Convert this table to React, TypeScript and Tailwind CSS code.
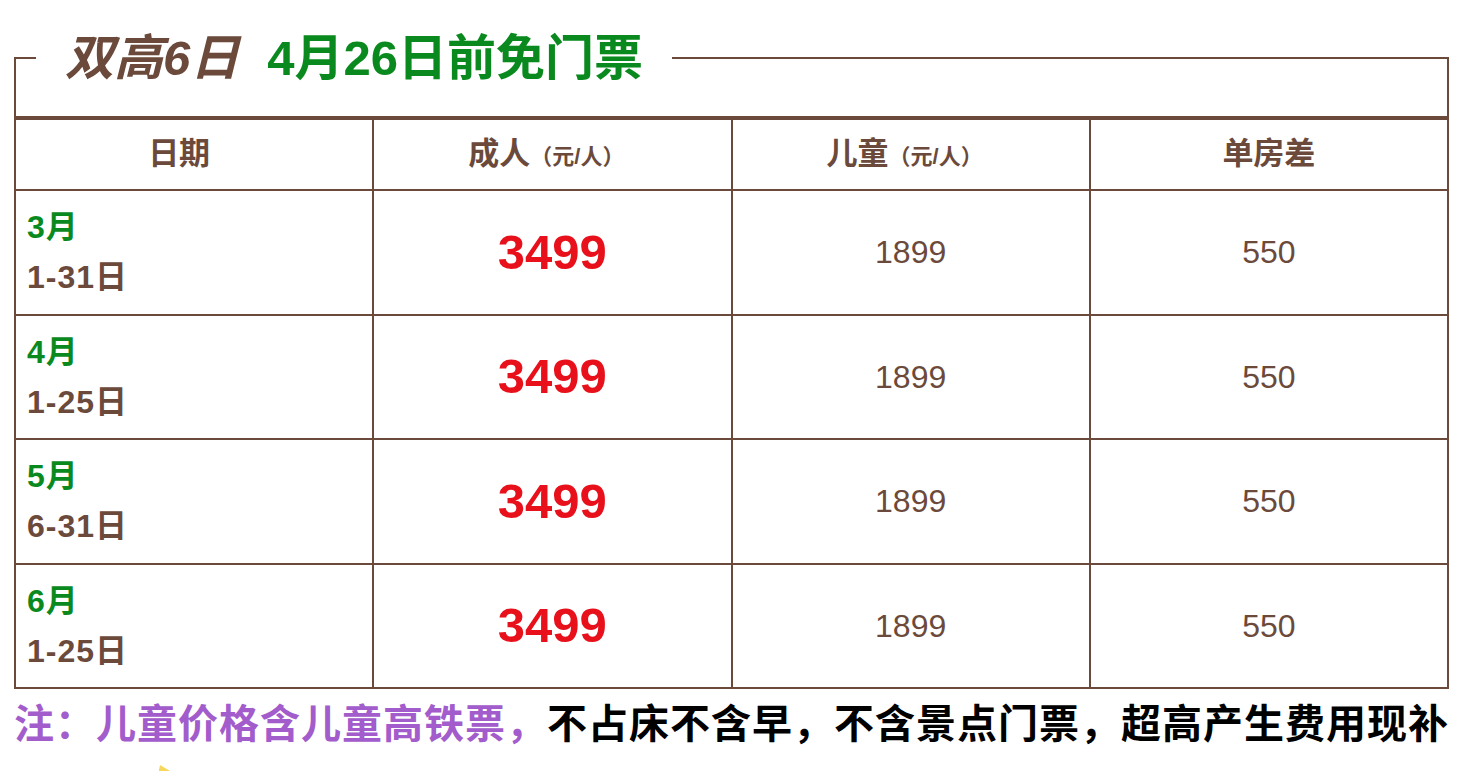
const font = { fontFamily: '"Liberation Sans", "Noto Sans CJK SC", Arial, sans-serif' };

const rows = [
  { month: '3月', days: '1-31日' },
  { month: '4月', days: '1-25日' },
  { month: '5月', days: '6-31日' },
  { month: '6月', days: '1-25日' },
];

export default function App() {
  return (
    <div className="w-[1481px] h-[771px] bg-white overflow-hidden" style={font}>
      <div className="ml-[14px] w-[1435px] pt-[57px]">
        {/* title area */}
        <div className="relative h-[59px] border-2 border-b-0 border-[#6b4a3c]">
          <div className="absolute left-[20px] top-[-1px] -translate-y-1/2 bg-white px-[29px] flex items-center gap-[28px] text-[49px] font-bold leading-none whitespace-nowrap">
            <span className="italic text-[#6b4a3c]">双高6日</span>
            <span className="text-[#0a8a1e]">4月26日前免门票</span>
          </div>
        </div>

        {/* price table */}
        <table className="w-full table-fixed border-collapse border-t-4 border-[#6b4a3c]">
          <thead>
            <tr className="h-[72px]">
              <th className="border-2 border-t-0 border-[#6b4a3c] pr-[30px] text-[31px] font-bold text-[#6b4a3c]">日期</th>
              <th className="border-2 border-t-0 border-[#6b4a3c] pr-[12px] text-[31px] font-bold text-[#6b4a3c]">
                成人<span className="text-[22px]">（元/人）</span>
              </th>
              <th className="border-2 border-t-0 border-[#6b4a3c] pr-[12px] text-[31px] font-bold text-[#6b4a3c]">
                儿童<span className="text-[22px]">（元/人）</span>
              </th>
              <th className="border-2 border-t-0 border-[#6b4a3c] text-[31px] font-bold text-[#6b4a3c]">单房差</th>
            </tr>
          </thead>
          <tbody>
            {rows.map((r) => (
              <tr key={r.month} className="h-[124.5px]">
                <td className="border-2 border-[#6b4a3c] pl-[11px] font-bold text-[32px] leading-[50px] tracking-[1px]">
                  <div className="text-[#0a8a1e]">{r.month}</div>
                  <div className="text-[#6b4a3c]">{r.days}</div>
                </td>
                <td className="border-2 border-[#6b4a3c] text-center text-[49px] font-bold text-[#e8101a]">3499</td>
                <td className="border-2 border-[#6b4a3c] text-center text-[32px] text-[#6b4a3c]">1899</td>
                <td className="border-2 border-[#6b4a3c] text-center text-[32px] text-[#6b4a3c]">550</td>
              </tr>
            ))}
          </tbody>
        </table>
      </div>

      {/* note */}
      <div className="ml-[14px] mt-[12px] text-[40px] font-bold leading-[46px] tracking-[1px] whitespace-nowrap">
        <span className="text-[#a25ccb]">注：儿童价格含儿童高铁票，</span>
        <span className="text-black">不占床不含早，不含景点门票，超高产生费用现补</span>
      </div>
      <div className="ml-[158px] mt-[18px]">
        <svg width="14" height="10" viewBox="0 0 14 10">
          <path d="M2 0 L12 6 L14 10 L0 10 Z" fill="#f7d65c" />
        </svg>
      </div>
    </div>
  );
}
